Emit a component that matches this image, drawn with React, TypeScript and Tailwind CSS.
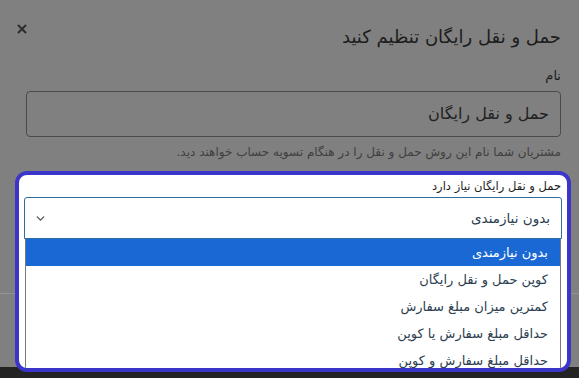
import { X, ChevronDown } from 'lucide-react'

const options = [
  'بدون نیازمندی',
  'کوپن حمل و نقل رایگان',
  'کمترین میزان مبلغ سفارش',
  'حداقل مبلغ سفارش یا کوپن',
  'حداقل مبلغ سفارش و کوپن',
]

export default function App() {
  return (
    <div
      dir="rtl"
      className="relative w-[579px] h-[378px] overflow-hidden bg-[#808080] font-['DejaVu_Sans',sans-serif] flex flex-col"
    >
      {/* HEADER */}
      <header className="flex items-center justify-between h-[60px] pr-[18px] pl-[15px] pt-[12px]">
        <h1 className="text-[18px] text-[#1c1c1c]">حمل و نقل رایگان تنظیم کنید</h1>
        <X size={14} strokeWidth={3.5} className="text-[#2e2e2e] -mt-[14px]" />
      </header>

      {/* BODY */}
      <div className="flex flex-col pr-[18px] pl-[26px]">
        <label className="text-[13px] text-[#1c1c1c] leading-[20px] mt-[6px]">نام</label>
        <div className="mt-[5px] h-[46px] border border-[#4a4a4a] rounded-[4px] flex items-center pr-[11px] text-[16px] text-[#222]">
          حمل و نقل رایگان
        </div>
        <p className="mt-[6px] -ml-[8px] text-[12px] text-[#3f3f3f]">
          مشتریان شما نام این روش حمل و نقل را در هنگام تسویه حساب خواهند دید.
        </p>
      </div>

      <div className="flex-1" />

      {/* FOOTER */}
      <footer className="h-[74px] border-t border-[#949494]" />
      <div className="h-[11px] bg-[#232323]" />

      {/* highlighted field (tour spotlight) */}
      <div className="absolute left-[15px] top-[171px] w-[556px] h-[201px] border-4 border-[#3b36c9] rounded-[12px] bg-white overflow-hidden px-[5px]">
        <div className="text-[11.5px] text-[#1e1e1e] leading-[22px] pr-[1px]">حمل و نقل رایگان نیاز دارد</div>
        <div className="h-[42px] border border-[#2f6f9f] rounded-t-[3px] flex items-center justify-between pr-[11px] pl-[9px] text-[13.5px] text-[#2c3e50]">
          <span>بدون نیازمندی</span>
          <ChevronDown size={13} strokeWidth={2.5} className="text-[#555]" />
        </div>
        <ul className="mx-[1px] border-x border-[#7a7a7a]">
          {options.map((o, i) => (
            <li
              key={o}
              className={
                i === 0
                  ? 'h-[27px] flex items-center pr-[12px] text-[13px] bg-[#1a68d3] text-white'
                  : 'h-[27px] flex items-center pr-[12px] text-[13px] text-[#2c3e50]'
              }
            >
              {o}
            </li>
          ))}
        </ul>
      </div>
    </div>
  )
}
